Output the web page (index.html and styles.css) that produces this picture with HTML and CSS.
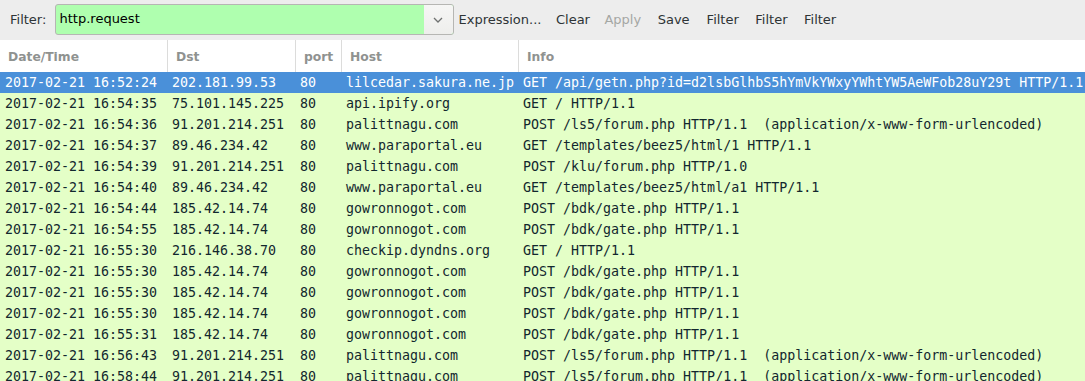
FILE: index.html
```html
<!DOCTYPE html>
<html>
<head>
<meta charset="utf-8">
<link rel="stylesheet" href="styles.css">
</head>
<body>
<div class="app">
  <div class="toolbar">
    <span class="label">Filter:</span>
    <div class="filter">
      <div class="filter-text">http.request</div>
      <div class="filter-drop">
        <svg width="10" height="6" viewBox="0 0 10 6"><path d="M1 1 L5 5 L9 1" fill="none" stroke="#6f7170" stroke-width="1.3"/></svg>
      </div>
    </div>
    <div class="buttons">
      <span class="btn b-expr">Expression...</span>
      <span class="btn b-clear">Clear</span>
      <span class="btn b-apply disabled">Apply</span>
      <span class="btn b-save">Save</span>
      <span class="btn b-f1">Filter</span>
      <span class="btn b-f2">Filter</span>
      <span class="btn b-f3">Filter</span>
    </div>
  </div>
  <div class="table">
    <div class="row head">
      <div class="cell">Date/Time</div>
      <div class="cell">Dst</div>
      <div class="cell">port</div>
      <div class="cell">Host</div>
      <div class="cell">Info</div>
    </div>
    <div class="row data selected"><div class="cell">2017-02-21 16:52:24</div><div class="cell">202.181.99.53</div><div class="cell">80</div><div class="cell">lilcedar.sakura.ne.jp</div><div class="cell">GET /api/getn.php?id=d2lsbGlhbS5hYmVkYWxyYWhtYW5AeWFob28uY29t HTTP/1.1</div></div>
    <div class="row data"><div class="cell">2017-02-21 16:54:35</div><div class="cell">75.101.145.225</div><div class="cell">80</div><div class="cell">api.ipify.org</div><div class="cell">GET / HTTP/1.1</div></div>
    <div class="row data"><div class="cell">2017-02-21 16:54:36</div><div class="cell">91.201.214.251</div><div class="cell">80</div><div class="cell">palittnagu.com</div><div class="cell">POST /ls5/forum.php HTTP/1.1  (application/x-www-form-urlencoded)</div></div>
    <div class="row data"><div class="cell">2017-02-21 16:54:37</div><div class="cell">89.46.234.42</div><div class="cell">80</div><div class="cell">www.paraportal.eu</div><div class="cell">GET /templates/beez5/html/1 HTTP/1.1</div></div>
    <div class="row data"><div class="cell">2017-02-21 16:54:39</div><div class="cell">91.201.214.251</div><div class="cell">80</div><div class="cell">palittnagu.com</div><div class="cell">POST /klu/forum.php HTTP/1.0</div></div>
    <div class="row data"><div class="cell">2017-02-21 16:54:40</div><div class="cell">89.46.234.42</div><div class="cell">80</div><div class="cell">www.paraportal.eu</div><div class="cell">GET /templates/beez5/html/a1 HTTP/1.1</div></div>
    <div class="row data"><div class="cell">2017-02-21 16:54:44</div><div class="cell">185.42.14.74</div><div class="cell">80</div><div class="cell">gowronnogot.com</div><div class="cell">POST /bdk/gate.php HTTP/1.1</div></div>
    <div class="row data"><div class="cell">2017-02-21 16:54:55</div><div class="cell">185.42.14.74</div><div class="cell">80</div><div class="cell">gowronnogot.com</div><div class="cell">POST /bdk/gate.php HTTP/1.1</div></div>
    <div class="row data"><div class="cell">2017-02-21 16:55:30</div><div class="cell">216.146.38.70</div><div class="cell">80</div><div class="cell">checkip.dyndns.org</div><div class="cell">GET / HTTP/1.1</div></div>
    <div class="row data"><div class="cell">2017-02-21 16:55:30</div><div class="cell">185.42.14.74</div><div class="cell">80</div><div class="cell">gowronnogot.com</div><div class="cell">POST /bdk/gate.php HTTP/1.1</div></div>
    <div class="row data"><div class="cell">2017-02-21 16:55:30</div><div class="cell">185.42.14.74</div><div class="cell">80</div><div class="cell">gowronnogot.com</div><div class="cell">POST /bdk/gate.php HTTP/1.1</div></div>
    <div class="row data"><div class="cell">2017-02-21 16:55:30</div><div class="cell">185.42.14.74</div><div class="cell">80</div><div class="cell">gowronnogot.com</div><div class="cell">POST /bdk/gate.php HTTP/1.1</div></div>
    <div class="row data"><div class="cell">2017-02-21 16:55:31</div><div class="cell">185.42.14.74</div><div class="cell">80</div><div class="cell">gowronnogot.com</div><div class="cell">POST /bdk/gate.php HTTP/1.1</div></div>
    <div class="row data"><div class="cell">2017-02-21 16:56:43</div><div class="cell">91.201.214.251</div><div class="cell">80</div><div class="cell">palittnagu.com</div><div class="cell">POST /ls5/forum.php HTTP/1.1  (application/x-www-form-urlencoded)</div></div>
    <div class="row data"><div class="cell">2017-02-21 16:58:44</div><div class="cell">91.201.214.251</div><div class="cell">80</div><div class="cell">palittnagu.com</div><div class="cell">POST /ls5/forum.php HTTP/1.1  (application/x-www-form-urlencoded)</div></div>
  </div>
</div>
</body>
</html>
```

FILE: styles.css
```css
html, body {
  margin: 0;
  padding: 0;
  width: 1085px;
  height: 381px;
  overflow: hidden;
  background: #e4ffc7;
}
.app {
  display: flex;
  flex-direction: column;
  font-family: "DejaVu Sans", sans-serif;
  font-size: 13px;
  color: #2e3436;
}
.toolbar {
  height: 40px;
  background: #ededed;
  display: flex;
  align-items: center;
  padding-left: 10px;
  box-sizing: border-box;
}
.label {
  width: 44.5px;
  padding-bottom: 1px;
}
.filter {
  width: 399px;
  height: 31px;
  margin-top: -1px;
  box-sizing: border-box;
  border: 1px solid #b6b6b3;
  border-radius: 3px;
  display: flex;
  overflow: hidden;
  background: #afffaf;
}
.filter-text {
  flex: 1;
  padding-left: 4px;
  line-height: 28px;
  color: #000;
}
.filter-drop {
  width: 29px;
  background: linear-gradient(#f6f6f5, #eeeeec);
  display: flex;
  align-items: center;
  justify-content: center;
}
.buttons {
  display: flex;
  align-items: center;
  padding-bottom: 1px;
}
.btn {
  white-space: nowrap;
}
.b-expr { margin-left: 5px; }
.b-clear { margin-left: 14.5px; }
.b-apply { margin-left: 14.5px; }
.b-save { margin-left: 16.5px; }
.b-f1 { margin-left: 17px; }
.b-f2 { margin-left: 16.5px; }
.b-f3 { margin-left: 16.5px; }
.disabled { color: #a5a7a4; }
.table {
  display: flex;
  flex-direction: column;
}
.row {
  display: grid;
  grid-template-columns: 167px 128px 46px 177px 1fr;
}
.head {
  height: 32px;
  background: #ffffff;
  font-weight: bold;
  font-size: 12.3px;
  color: #8f9290;
}
.head .cell {
  padding-left: 8px;
  line-height: 35px;
  border-left: 1px solid #dcdcdb;
}
.head .cell:first-child {
  border-left: none;
}
.data {
  height: 21px;
  font-family: "DejaVu Sans Mono", monospace;
  font-size: 13.3px;
  line-height: 21px;
  color: #12272e;
  background: #e4ffc7;
}
.data .cell {
  padding-left: 5px;
  white-space: pre;
  overflow: visible;
}
.selected {
  background: #4a90d9;
  color: #ffffff;
}
```
